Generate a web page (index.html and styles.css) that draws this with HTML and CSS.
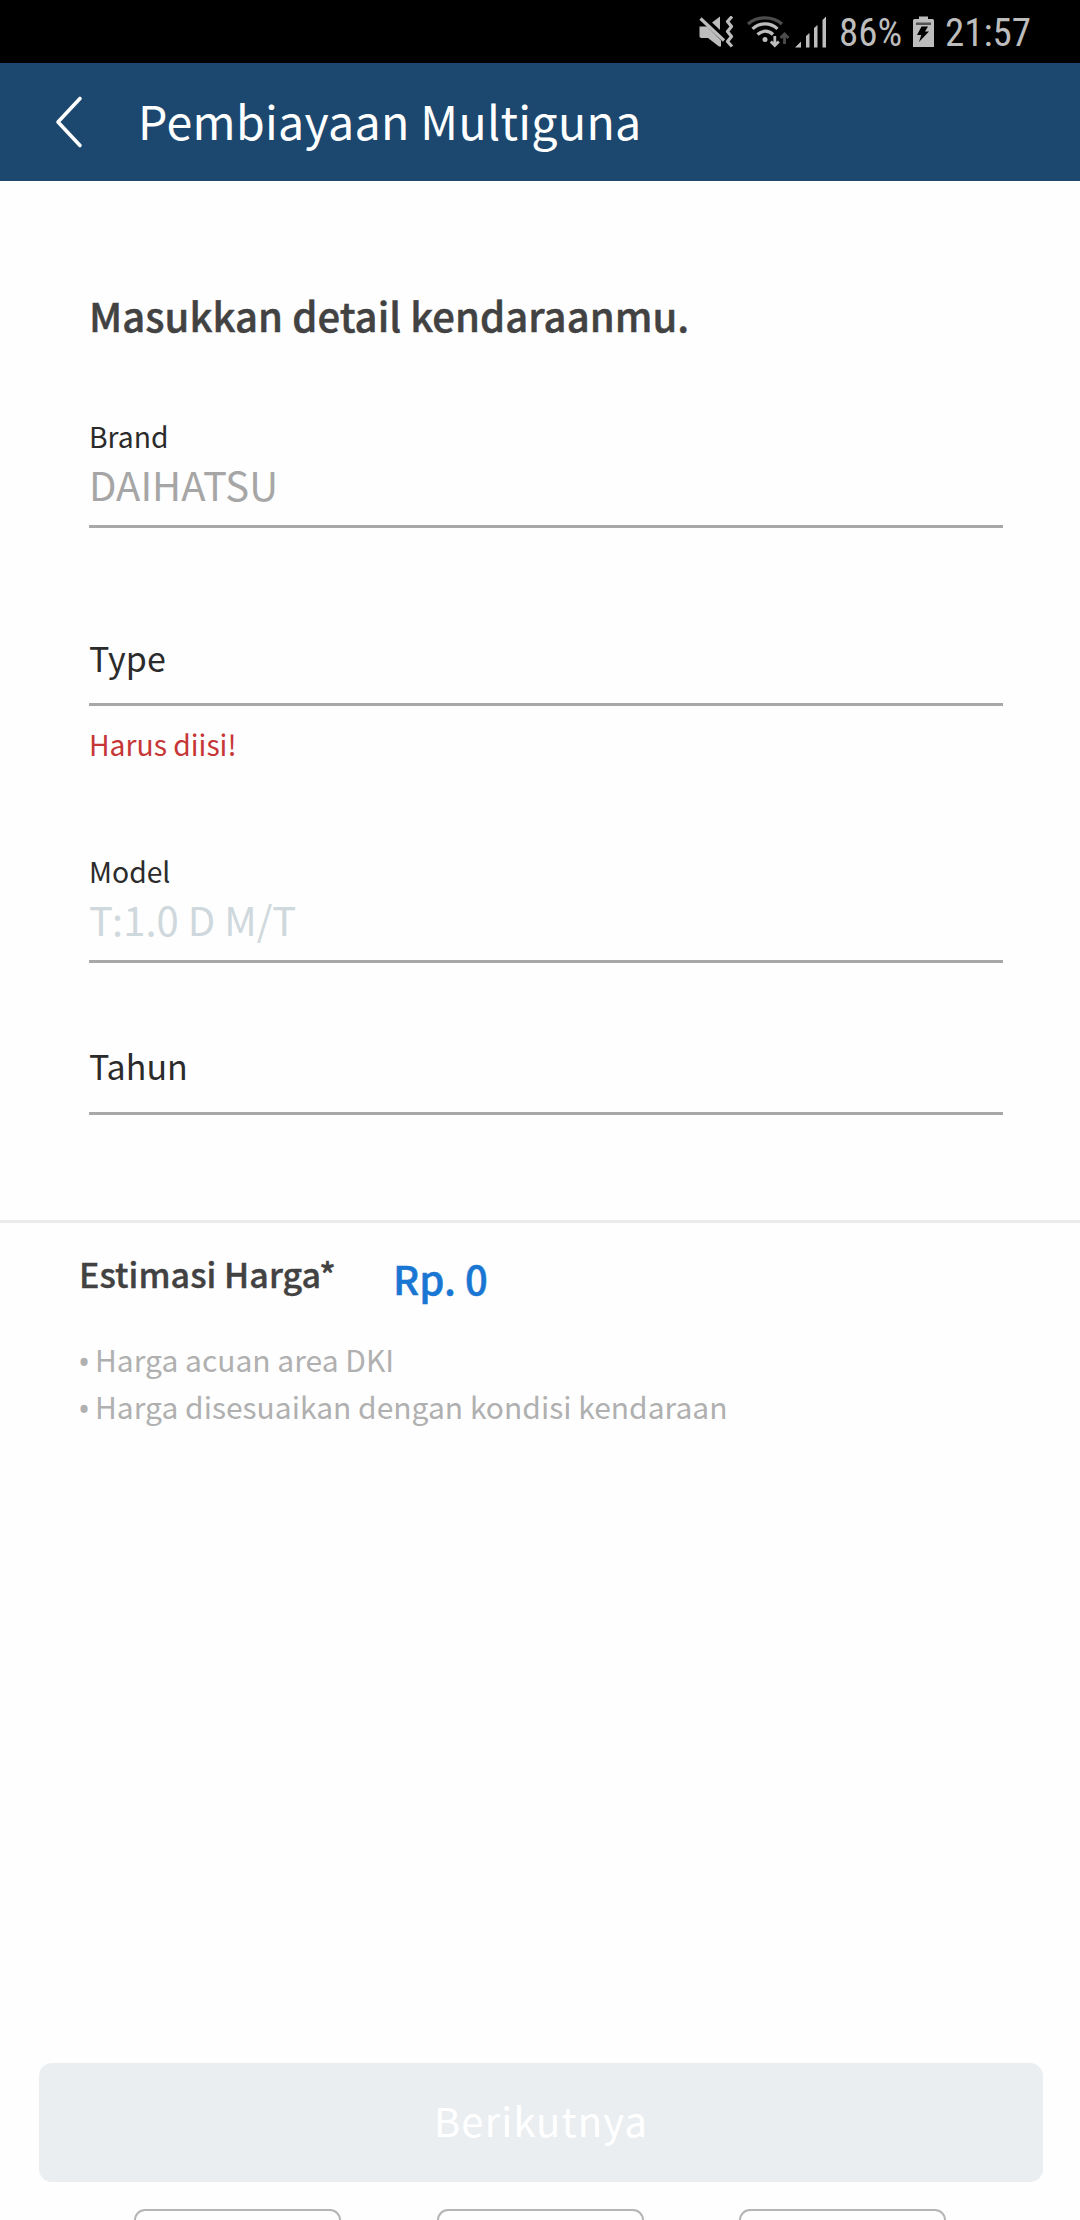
FILE: index.html
```html
<!DOCTYPE html>
<html lang="id">
<head>
<meta charset="utf-8">
<title>Pembiayaan Multiguna</title>
<link rel="stylesheet" href="styles.css">
</head>
<body>
<div class="screen">
  <div class="status-bar">
    <svg class="status-icons" width="130" height="34" viewBox="0 0 130 34" fill="#bdbdbd">
      <!-- muted speaker with vibration wave -->
      <path d="M0.500 10.500h7.500L12 14.500 22 24.500v6H20L9 22H2L0.500 21z"/>
      <path d="M21 0.500v13.500L13 6.500z"/>
      <path d="M3.500 1 26 22.500" fill="none" stroke="#000" stroke-width="3"/>
      <path d="M1.500 2.500 25 24.500" fill="none" stroke="#bdbdbd" stroke-width="3.200"/>
      <path d="M33 0.500 28.500 5.500l4 5-4 5 4 5-4 5 4.500 5" fill="none" stroke="#bdbdbd" stroke-width="3.200" stroke-linejoin="round"/>
      <!-- wifi with traffic arrows -->
      <g fill="none" stroke-width="3.200">
        <path d="M49 8c9-8.300 25-8.300 34 0" stroke="#4c4c4c"/>
        <path d="M53.500 12.800c7-6.600 18-6.600 25 0" stroke="#bdbdbd"/>
        <path d="M58.500 18.500c4.500-4.400 11-4.400 15.500 0" stroke="#bdbdbd"/>
        <path d="M75.800 20v9M71.800 25.500l4 4 4-4" stroke="#bdbdbd" stroke-width="2.800"/>
        <path d="M85.500 28v-9M81.500 22l4-4 4 4" stroke="#4c4c4c" stroke-width="2.800"/>
      </g>
      <circle cx="66" cy="23.500" r="2.500"/>
      <!-- signal strength -->
      <path d="M96 31.500l6-6v6zM107 31.500V20l3.500-3v14.500zM115 31.500V12l3.500-3v22.500zM123.500 31.500V4l3.500-3.500v31z"/>
    </svg>
    <span class="battery-level">86%</span>
    <svg class="battery" width="22" height="34" viewBox="0 0 22 34">
      <path d="M2.500 3H7V0.500h9V3h4.500q1.500 0 1.500 1.500V31H1V4.500Q1 3 2.500 3z" fill="#bdbdbd"/>
      <path d="M4 6.500h15v2.500H4z" fill="#555"/>
      <path d="M9.500 10.500h6.500L13 15.500h4L7 26l2.300-7H5z" fill="#000"/>
    </svg>
    <span class="clock">21:57</span>
  </div>

  <header class="app-bar">
    <svg class="back" width="30" height="54" viewBox="0 0 30 54" fill="none" stroke="#fff" stroke-width="3.600" stroke-linecap="round" stroke-linejoin="round">
      <path d="M26 3.500 4 27l22 23.500"/>
    </svg>
    <h1 class="app-title">Pembiayaan Multiguna</h1>
  </header>

  <main class="form">
    <h2 class="form-title">Masukkan detail kendaraanmu.</h2>
    <div class="field field-brand">
      <div class="label">Brand</div>
      <div class="value">DAIHATSU</div>
    </div>
    <div class="field field-type">
      <div class="placeholder">Type</div>
    </div>
    <div class="error">Harus diisi!</div>
    <div class="field field-model">
      <div class="label">Model</div>
      <div class="value value-disabled">T:1.0 D M/T</div>
    </div>
    <div class="field field-year">
      <div class="placeholder">Tahun</div>
    </div>
  </main>

  <section class="estimate">
    <div class="estimate-row">
      <div class="estimate-label">Estimasi Harga*</div>
      <div class="estimate-price">Rp. 0</div>
    </div>
    <ul class="notes">
      <li><span class="bullet">•</span>Harga acuan area DKI</li>
      <li><span class="bullet">•</span>Harga disesuaikan dengan kondisi kendaraan</li>
    </ul>
  </section>

  <footer class="actions">
    <button class="next" disabled>Berikutnya</button>
    <div class="options">
      <div class="option"></div>
      <div class="option"></div>
      <div class="option"></div>
    </div>
  </footer>
</div>
</body>
</html>
```
FILE: styles.css
```css
* { box-sizing: border-box; }

body {
  margin: 0;
  background: #fefefe;
  font-family: "Noto Sans CJK SC", "Noto Sans", sans-serif;
  color: #2b2b2b;
}

.screen {
  width: 1080px;
  height: 2220px;
  display: flex;
  flex-direction: column;
  overflow: hidden;
}

.status-bar {
  flex: none;
  height: 63px;
  padding: 16px 50px 0 0;
  display: flex;
  justify-content: flex-end;
  align-items: flex-start;
  background: #000;
  color: #bdbdbd;
  font: 39px/34px "Roboto Condensed", Roboto, sans-serif;
}

.status-icons { margin-right: 10px; }
.battery-level { width: 62px; margin-right: 11px; white-space: nowrap; }
.battery { margin-right: 11px; }
.clock { width: 85px; white-space: nowrap; }

.app-bar {
  flex: none;
  height: 118px;
  display: flex;
  align-items: center;
  padding-left: 54px;
  background: #1c486f;
  color: #fff;
}

.app-title {
  margin: 0 0 0 54px;
  padding-bottom: 6px;
  font-size: 46.5px;
  font-weight: 400;
  line-height: 65px;
  letter-spacing: 0.3px;
}

.form { padding: 105px 77px 105px 89px; }

.form-title {
  margin: 0;
  font-size: 40px;
  font-weight: 500;
  line-height: 58px;
  letter-spacing: 0.05px;
  color: #424242;
  -webkit-text-stroke: 0.5px #424242;
}

.field { border-bottom: 3px solid #a8a8a8; }
.field-brand { margin-top: 71px; padding-bottom: 13px; }
.field-type { margin-top: 105px; padding-bottom: 21px; }
.field-model { margin-top: 86px; padding-bottom: 13px; }
.field-year { margin-top: 78px; padding-bottom: 22px; }

.label, .error { font-size: 28.3px; line-height: 41px; }
.error { margin-top: 17px; color: #c63636; }
.placeholder { font-size: 34px; line-height: 49px; }
.value { font-size: 40px; line-height: 56px; color: #a6a6a6; }
.value-disabled { color: #cfd8dc; }

.estimate {
  border-top: 3px solid #ebebeb;
  padding: 26px 79px 0;
}

.estimate-row { display: flex; align-items: flex-start; }
.estimate-label {
  width: 314px;
  font-size: 34px;
  font-weight: 500;
  line-height: 49px;
  letter-spacing: 0.05px;
  color: #424242;
  -webkit-text-stroke: 0.4px #424242;
}
.estimate-price {
  font-size: 40px;
  font-weight: 500;
  line-height: 58px;
  color: #1976d2;
  -webkit-text-stroke: 0.5px #1976d2;
}

.notes {
  list-style: none;
  margin: 29px 0 0;
  padding: 0;
  font-size: 30px;
  line-height: 47px;
  color: #b0b0b0;
}
.notes li { display: flex; }
.bullet {
  width: 16px;
  margin-left: -1px;
  margin-right: 1px;
  padding-top: 2px;
  height: 47px;
  font-family: "Noto Sans", sans-serif;
  font-size: 32px;
}

.actions { margin-top: auto; }

.next {
  display: block;
  width: 1004px;
  height: 119px;
  margin: 0 0 27px 39px;
  padding: 0 0 5px;
  border: 0;
  border-radius: 13px;
  background: #eaeef1;
  color: #fff;
  font-family: inherit;
  font-size: 40px;
  line-height: 58px;
  letter-spacing: 1.15px;
}

.options {
  height: 11px;
  padding: 0 134px;
  display: flex;
  justify-content: space-between;
  overflow: hidden;
}
.option {
  width: 207px;
  height: 60px;
  border: 2px solid #b5b5b5;
  border-radius: 11px;
}
```
